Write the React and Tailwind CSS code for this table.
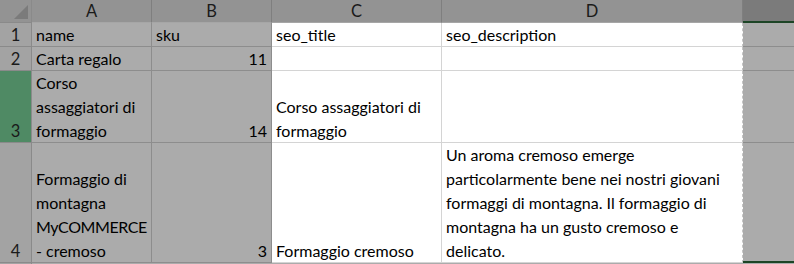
import React from 'react';

const font = { fontFamily: 'Lato, "Open Sans", sans-serif' };

// column widths include the right gridline
const cols = [
  { key: 'A', w: 'w-[120px]', shade: true },
  { key: 'B', w: 'w-[120px]', shade: true },
  { key: 'C', w: 'w-[170px]', shade: false },
  { key: 'D', w: 'w-[301px]', shade: false },
];

const rows = [
  {
    n: 1,
    h: 'h-[24px]',
    cells: [['name'], ['sku'], ['seo_title'], ['seo_description']],
  },
  { n: 2, h: 'h-[24px]', cells: [['Carta regalo'], [11], [], []] },
  {
    n: 3,
    h: 'h-[72px]',
    active: true,
    cells: [
      ['Corso', 'assaggiatori di', 'formaggio'],
      [14],
      ['Corso assaggiatori di', 'formaggio'],
      [],
    ],
  },
  {
    n: 4,
    h: 'h-[120px]',
    cells: [
      ['Formaggio di', 'montagna', 'MyCOMMERCE', '- cremoso'],
      [3],
      ['Formaggio cremoso'],
      [
        'Un aroma cremoso emerge',
        'particolarmente bene nei nostri giovani',
        'formaggi di montagna. Il formaggio di',
        'montagna ha un gusto cremoso e',
        'delicato.',
      ],
    ],
  },
];

function Cell({ col, lines, last }) {
  // numbers go right, text goes left, like a spreadsheet
  const numeric = typeof lines[0] === 'number';
  const bg = col.shade ? 'bg-[#ababab] border-[#8d8d8d]' : 'bg-white border-[#d4d4d4]';
  return (
    <div
      className={`${col.w} shrink-0 flex flex-col justify-end overflow-hidden border-b border-r ${bg} ${
        last ? 'border-r-[#c4c4c4] [border-right-style:dashed]' : ''
      } ${numeric ? 'items-end pr-[4px]' : 'items-start pl-[4px]'}`}
    >
      {lines.map((l) => (
        <div
          key={l}
          className={`relative top-[1px] leading-[24px] text-[16px] text-black whitespace-nowrap ${
            l === 'MyCOMMERCE' ? 'tracking-[-0.4px]' : ''
          }`}
        >
          {l}
        </div>
      ))}
    </div>
  );
}

export default function App() {
  return (
    <div className="w-[794px] h-[264px] overflow-hidden bg-[#ababab]" style={font}>
      {/* column headers */}
      <div className="flex h-[23px]">
        <div className="w-[32px] shrink-0 bg-[#939393] border-r border-b border-[#8a8a8a] relative">
          <svg className="absolute right-[3px] bottom-[3px]" width="14" height="14" viewBox="0 0 14 14">
            <polygon points="14,0 14,14 0,14" fill="#7b7b7b" />
          </svg>
        </div>
        {cols.map((c) => (
          <div
            key={c.key}
            className={`${c.w} shrink-0 bg-[#939393] border-r border-r-[#7f7f7f] border-b border-b-[#a6a6a6] flex items-center justify-center text-[16.5px] text-[#1a1a1a]`}
          >
            {c.key}
          </div>
        ))}
        <div className="flex-1 bg-[#7b7b7b] border-b-2 border-[#1d4526]" />
      </div>

      {rows.map((r, i) => (
        <div key={r.n} className={`flex ${r.h}`}>
          <div
            className={`w-[32px] shrink-0 border-r border-b border-[#8a8a8a] flex items-end justify-center text-[16.5px] leading-[24px] text-[#1a1a1a] ${
              r.active ? 'bg-[#4f8a64]' : 'bg-[#a3a3a3]'
            }`}
          >
            <span className="relative top-[1px]">{r.n}</span>
          </div>
          {cols.map((c, j) => (
            <Cell key={c.key} col={c} lines={r.cells[j]} last={j === cols.length - 1} />
          ))}
          <div
            className={`flex-1 bg-[#ababab] ${
              i === rows.length - 1 ? 'border-b-2 border-[#1d4526]' : 'border-b border-[#8d8d8d]'
            }`}
          />
        </div>
      ))}
      <div className="flex h-[4px]">
        <div className="w-[32px] bg-[#a3a3a3] border-r border-[#8a8a8a]" />
        <div className="flex-1 bg-[#ababab]" />
      </div>
    </div>
  );
}
